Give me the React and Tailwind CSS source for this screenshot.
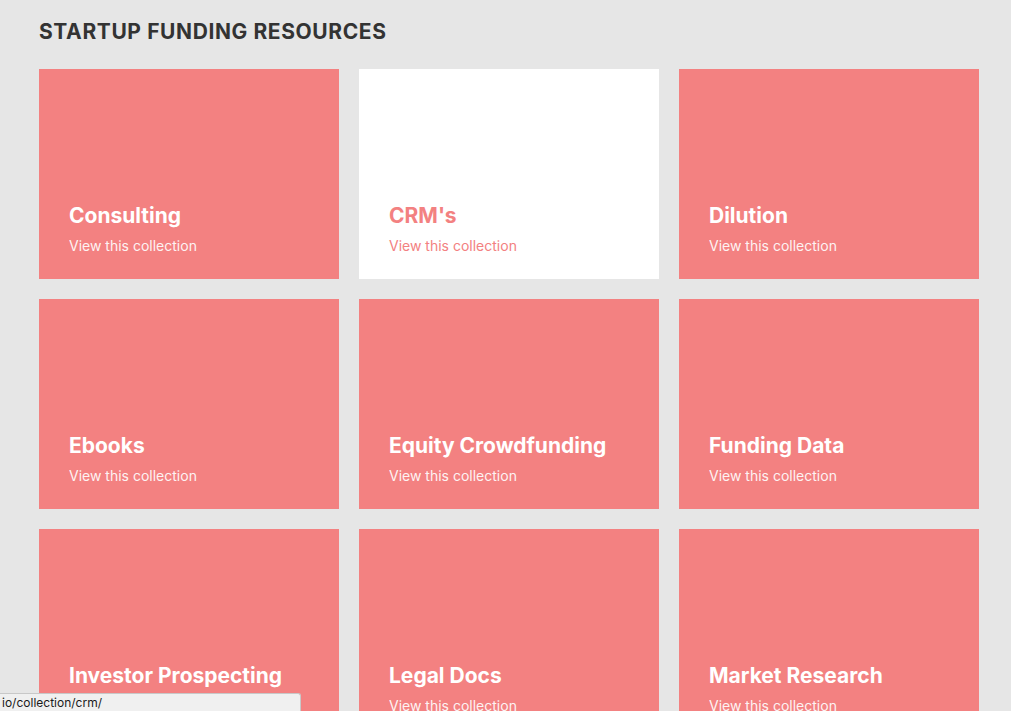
import React from "react";

const collections = [
  { name: "Consulting", slug: "consulting" },
  { name: "CRM's", slug: "crm", active: true },
  { name: "Dilution", slug: "dilution" },
  { name: "Ebooks", slug: "ebooks" },
  { name: "Equity Crowdfunding", slug: "equity-crowdfunding" },
  { name: "Funding Data", slug: "funding-data" },
  { name: "Investor Prospecting", slug: "investor-prospecting" },
  { name: "Legal Docs", slug: "legal-docs" },
  { name: "Market Research", slug: "market-research" },
];

function CollectionCard({ name, active }) {
  return (
    <a
      href="#"
      className={`flex flex-col justify-end h-[210px] px-[30px] pb-[23px] ${
        active ? "bg-white text-[#f38181]" : "bg-[#f38181] text-white"
      }`}
    >
      <h2 className="text-[21px] leading-7 font-bold mb-[6px]">{name}</h2>
      <p className={`text-sm leading-5 ${active ? "opacity-100" : "opacity-90"}`}>
        View this collection
      </p>
    </a>
  );
}

export default function App() {
  return (
    <div
      className="h-[711px] overflow-hidden bg-[#e6e6e6] pl-[39px] pt-[18px]"
      style={{ fontFamily: "Inter, 'Noto Sans', sans-serif" }}
    >
      <h1 className="text-[21px] leading-7 font-bold tracking-[0.6px] text-[#333333] mb-[23px]">
        STARTUP FUNDING RESOURCES
      </h1>

      {/* collections grid */}
      <div className="grid grid-cols-[300px_300px_300px] gap-5">
        {collections.map((c) => (
          <CollectionCard key={c.slug} name={c.name} active={c.active} />
        ))}
      </div>

      {/* link preview in the status bar */}
      <div className="fixed left-0 bottom-0 w-[301px] h-[18px] bg-[#f0f0f0] border-t border-r border-[#c8c8c8] rounded-tr-[3px] pl-[2px] text-[12px] leading-[17px] text-[#1a1a1a]">
        io/collection/crm/
      </div>
    </div>
  );
}
